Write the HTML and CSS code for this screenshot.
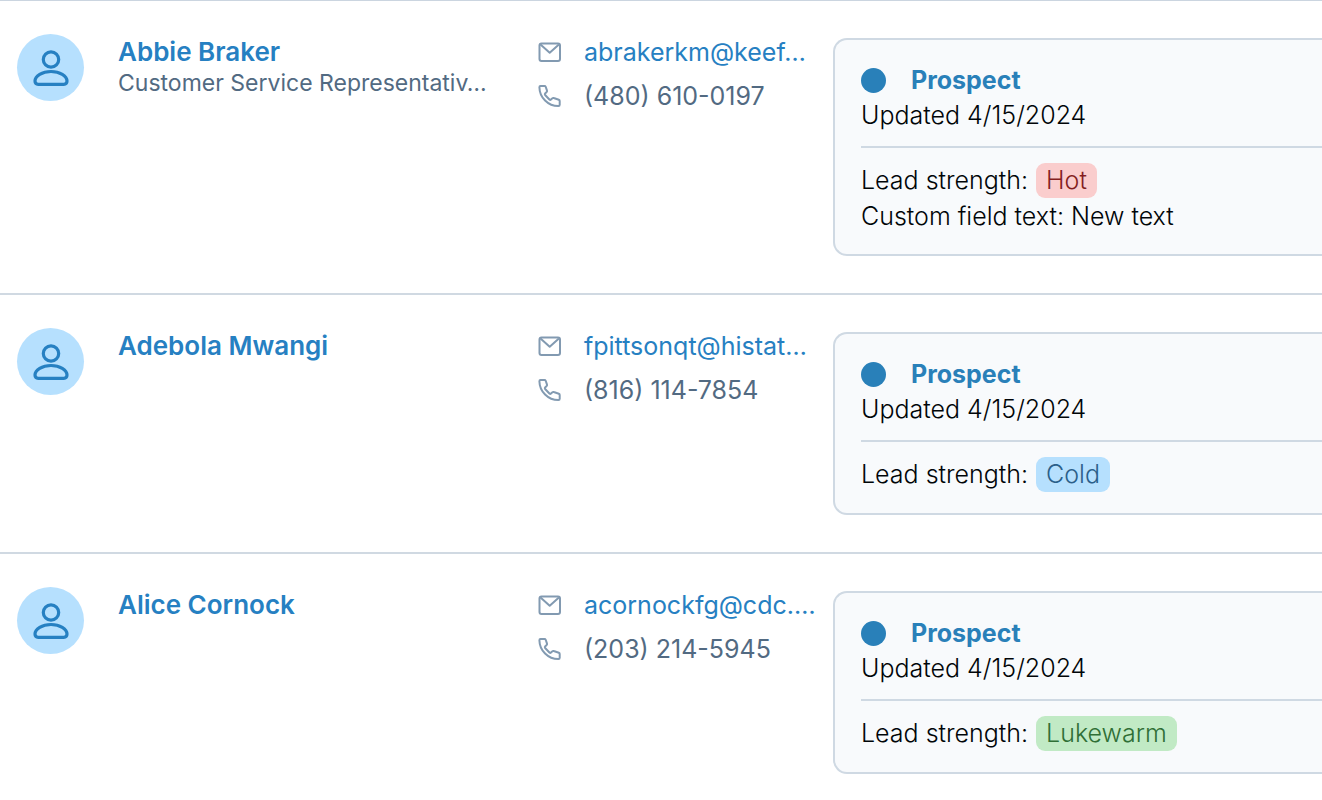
FILE: index.html
```html
<!DOCTYPE html>
<html lang="en">
<head>
  <meta charset="UTF-8">
  <meta name="viewport" content="width=device-width, initial-scale=1.0">
  <title>Contacts</title>
  <link rel="stylesheet" href="styles.css">
</head>
<body>
  <!-- Shared icons -->
  <svg class="icon-defs" aria-hidden="true">
    <symbol id="icon-user" viewBox="0 0 36 38">
      <circle cx="18" cy="10.5" r="7.7" />
      <path d="M5.2 35.3h25.6c2 0 3.2-1.4 3.2-3.2 0-5.4-7.2-9.6-16-9.6S2 26.7 2 32.1c0 1.8 1.2 3.2 3.2 3.2z" />
    </symbol>
    <symbol id="icon-mail" viewBox="0 0 24 24">
      <rect x="1.500" y="2.500" width="20.500" height="17.500" rx="2" />
      <path d="M2.500 3.500l9.200 8.200 9.200-8.200" />
    </symbol>
    <symbol id="icon-phone" viewBox="0 0 24 24">
      <path d="M2.500 1h4c.6 0 1 .3 1.200.8l1.300 3.800c.2.600 0 1-.4 1.400L7.100 8.400c-.5.500-.4 1 0 1.600l4.300 4.500c.6.500 1.100.5 1.600 0l1.400-1.200c.4-.4.900-.5 1.400-.3l5 1.700c.6.200.9.700.9 1.300v3.800c0 .8-.5 1.300-1.300 1.300C10 21.100 1.600 12.600 1.400 2.200c0-.7.400-1.200 1.100-1.200z" />
    </symbol>
  </svg>

  <main class="contact-list">
    <article class="contact">
      <div class="avatar"><svg class="icon-user" aria-hidden="true"><use href="#icon-user" /></svg></div>
      <div class="person">
        <a class="name" href="#">Abbie Braker</a>
        <p class="job">Customer Service Representativ…</p>
      </div>
      <div class="details">
        <div class="detail">
          <svg class="icon" aria-hidden="true"><use href="#icon-mail" /></svg>
          <a class="email" href="#">abrakerkm@keef…</a>
        </div>
        <div class="detail">
          <svg class="icon" aria-hidden="true"><use href="#icon-phone" /></svg>
          <span>(480) 610-0197</span>
        </div>
      </div>
      <section class="card">
        <div class="status"><span class="dot"></span><a class="stage" href="#">Prospect</a></div>
        <p class="updated">Updated 4/15/2024</p>
        <hr class="divider">
        <div class="strength">Lead strength: <span class="badge hot">Hot</span></div>
        <p class="custom">Custom field text: New text</p>
      </section>
    </article>

    <article class="contact">
      <div class="avatar"><svg class="icon-user" aria-hidden="true"><use href="#icon-user" /></svg></div>
      <div class="person">
        <a class="name" href="#">Adebola Mwangi</a>
      </div>
      <div class="details">
        <div class="detail">
          <svg class="icon" aria-hidden="true"><use href="#icon-mail" /></svg>
          <a class="email" href="#">fpittsonqt@histat…</a>
        </div>
        <div class="detail">
          <svg class="icon" aria-hidden="true"><use href="#icon-phone" /></svg>
          <span>(816) 114-7854</span>
        </div>
      </div>
      <section class="card">
        <div class="status"><span class="dot"></span><a class="stage" href="#">Prospect</a></div>
        <p class="updated">Updated 4/15/2024</p>
        <hr class="divider">
        <div class="strength">Lead strength: <span class="badge cold">Cold</span></div>
      </section>
    </article>

    <article class="contact">
      <div class="avatar"><svg class="icon-user" aria-hidden="true"><use href="#icon-user" /></svg></div>
      <div class="person">
        <a class="name" href="#">Alice Cornock</a>
      </div>
      <div class="details">
        <div class="detail">
          <svg class="icon" aria-hidden="true"><use href="#icon-mail" /></svg>
          <a class="email" href="#">acornockfg@cdc.…</a>
        </div>
        <div class="detail">
          <svg class="icon" aria-hidden="true"><use href="#icon-phone" /></svg>
          <span>(203) 214-5945</span>
        </div>
      </div>
      <section class="card">
        <div class="status"><span class="dot"></span><a class="stage" href="#">Prospect</a></div>
        <p class="updated">Updated 4/15/2024</p>
        <hr class="divider">
        <div class="strength">Lead strength: <span class="badge lukewarm">Lukewarm</span></div>
      </section>
    </article>
  </main>
</body>
</html>
```
FILE: styles.css
```css
* {
  box-sizing: border-box;
}

body {
  margin: 0;
  background-color: #fff;
  color: #000508;
  font-family: Inter, sans-serif;
  font-size: 25px;
  line-height: 35px;
  overflow: hidden;
}

p {
  margin: 0;
}

a {
  color: #2680c2;
  text-decoration: none;
}

a:hover {
  text-decoration: underline;
}

.icon-defs {
  display: none;
}

.contact-list {
  border-top: 1px solid #cbd5e0;
}

.contact {
  display: grid;
  grid-template-columns: 67px minmax(0, 420fr) minmax(0, 306fr) minmax(0, 512fr);
  padding: 37px 0 37px 17px;
  border-bottom: 2px solid #d0d9e2;
}

.avatar {
  display: flex;
  align-items: center;
  justify-content: center;
  width: 67px;
  height: 67px;
  margin-top: -4px;
  border-radius: 50%;
  background-color: #b6e0fe;
}

.icon-user {
  width: 36px;
  height: 38px;
  fill: none;
  stroke: #2680c2;
  stroke-width: 3.2;
}

.person {
  margin: -4px 0 0 34px;
}

.name {
  display: block;
  font-size: 26px;
  font-weight: 600;
}

.job {
  color: #526a82;
  font-size: 23px;
  line-height: 28px;
  white-space: nowrap;
}

.details {
  display: flex;
  flex-direction: column;
  gap: 9px;
  margin: -3px 0 0 34px;
  color: #526a82;
}

.detail {
  display: flex;
  align-items: center;
  gap: 22px;
  white-space: nowrap;
}

.icon {
  flex: none;
  width: 24px;
  height: 24px;
  fill: none;
  stroke: #829ab1;
  stroke-width: 2;
  stroke-linejoin: round;
}

.card {
  margin-left: 23px;
  padding: 23px 0 20px 26px;
  border: 2px solid #cfd9e3;
  border-right: none;
  border-radius: 14px 0 0 14px;
  background-color: #f8fafc;
  font-weight: 300;
}

.status {
  display: flex;
  align-items: center;
  gap: 25px;
}

.dot {
  width: 25px;
  height: 25px;
  border-radius: 50%;
  background-color: #2980b9;
}

.stage {
  color: #2980b9;
  font-weight: 700;
}

.divider {
  height: 2px;
  margin: 13px 0;
  border: none;
  background-color: #cfd9e3;
}

.strength {
  display: flex;
  align-items: center;
  gap: 8px;
  height: 38px;
}

.badge {
  padding: 0 10px;
  border-radius: 9px;
}

.hot {
  background-color: #facdcd;
  color: #841e1e;
}

.cold {
  background-color: #b6e0fe;
  color: #2b5f8a;
}

.lukewarm {
  background-color: #c1eac5;
  color: #2f6f36;
}
```
